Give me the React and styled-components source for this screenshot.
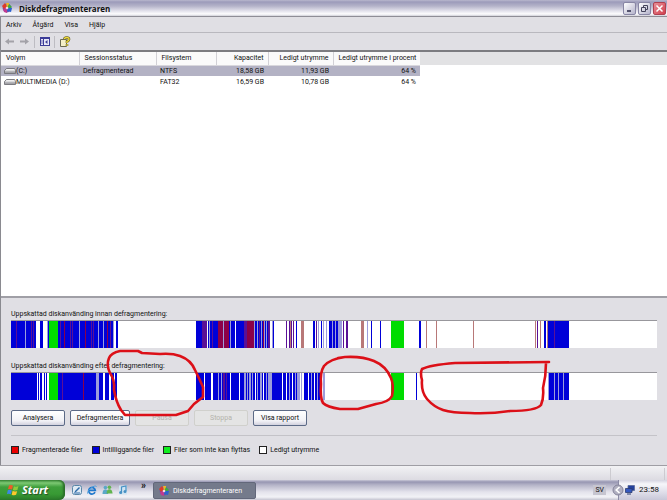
import React from "react";
import styled, { createGlobalStyle } from "styled-components";

const GlobalStyle = createGlobalStyle`
  * {
    box-sizing: border-box;
  }
  body {
    margin: 0;
    font-family: Roboto, "Liberation Sans", sans-serif;
    font-size: 7px;
    line-height: 10px;
    color: #111;
    background: #e0dfe4;
  }
  button {
    font: inherit;
    color: inherit;
    padding: 0;
  }
`;

const Screen = styled.div`
  min-height: 100vh;
  display: flex;
  flex-direction: column;
`;

const TitleBar = styled.header`
  height: 16px;
  display: flex;
  align-items: center;
  gap: 6px;
  padding: 0 1px 0 1px;
  background: linear-gradient(#b9b8cd 0, #9c9bba 2px, #b4b3c9 6px, #e3e2ec 11px, #fdfdfe 14px, #d0d0d8 16px);
`;

const Title = styled.h1`
  flex: 1;
  margin: 0;
  padding-top: 1px;
  font-family: "Open Sans", sans-serif;
  font-size: 8px;
  font-weight: bold;
`;

const WindowButtons = styled.div`
  display: flex;
  gap: 2px;
`;

const WindowButton = styled.button`
  width: 13px;
  height: 13px;
  display: flex;
  align-items: center;
  justify-content: center;
  border: 1px solid ${(p) => (p.$close ? "#b04050" : "#8886a4")};
  border-radius: 2px;
  background: ${(p) =>
    p.$close
      ? "linear-gradient(135deg, #e89098, #d2404e)"
      : "linear-gradient(135deg, #ffffff, #b4b3cb)"};
`;

const Window = styled.main`
  flex: 1;
  display: flex;
  flex-direction: column;
  border-left: 1px solid #8a8a90;
`;

const MenuBar = styled.nav`
  height: 17px;
  display: flex;
  align-items: center;
  gap: 11px;
  padding: 1px 0 0 5px;
  border-top: 1px solid #8e8d96;
  border-bottom: 1px solid #b9b8be;
`;

const MenuItem = styled.button`
  border: none;
  background: none;
`;

const Toolbar = styled.div`
  height: 19px;
  display: flex;
  align-items: center;
  padding-left: 1px;
  border-bottom: 2px solid #7c7c80;
`;

const ToolButton = styled.button`
  width: 15px;
  height: 14px;
  display: flex;
  align-items: center;
  justify-content: center;
  border: none;
  background: none;
`;

const ToolDivider = styled.span`
  width: 1px;
  height: 12px;
  margin: 0 2px;
  background: #bdbcc2;
`;

const VolumeList = styled.section`
  flex: 1;
  min-height: 100px;
  background: linear-gradient(#e2e2e4 0, #e2e2e4 13px, #fff 13px);
  border-bottom: 2px solid #a09fa6;
`;

const Table = styled.table`
  width: 419px;
  table-layout: fixed;
  border-collapse: collapse;
`;

const Th = styled.th`
  height: 13px;
  padding: 0 4px 0 5px;
  background: #fafafa;
  border-right: 1px solid #d2d1d6;
  border-bottom: 1px solid #d8d7dc;
  font-weight: normal;
  text-align: ${(p) => (p.$right ? "right" : "left")};
  white-space: nowrap;

  &:last-child {
    border-right: none;
  }
`;

const Row = styled.tr`
  background: ${(p) => (p.$selected ? "#b3b2c4" : "#fff")};
`;

const Td = styled.td`
  height: 11px;
  padding: 0 4px 0 ${(p) => (p.$first ? "3px" : "4px")};
  text-align: ${(p) => (p.$right ? "right" : "left")};
  white-space: nowrap;
`;

const Volume = styled.span`
  display: flex;
  align-items: center;
`;

const Panel = styled.section`
  position: relative;
  padding: 11px 10px 10px;
`;

const UsageLabel = styled.div`
  height: 11px;
  white-space: nowrap;
`;

const UsageBar = styled.svg`
  display: block;
  width: 100%;
  height: 28px;
  margin-bottom: 13px;
  background: #fff;
  border-top: 1px solid #98979c;
`;

const Marker = styled.svg`
  position: absolute;
  left: 0;
  top: 0;
  width: 100%;
  height: 100%;
  overflow: visible;
  pointer-events: none;
`;

const Actions = styled.div`
  display: flex;
  gap: 5px;
  padding: 0 0 9px;
  margin-top: -3px;
  border-bottom: 1px solid #c4c3c8;
`;

const ActionButton = styled.button`
  width: ${(p) => (p.$wide ? "60px" : "54px")};
  height: 16px;
  border: 1px solid #5c6a86;
  border-radius: 2px;
  background: linear-gradient(#fff, #f2f2f6 70%, #d2d1de);
  white-space: nowrap;
  &:disabled {
    color: #b4b3ac;
    border-color: #d0d0cc;
    background: #e4e4e4;
  }
`;

const Legend = styled.ul`
  display: flex;
  gap: 9px;
  margin: 0;
  padding: 9px 0 0;
  list-style: none;
`;

const LegendItem = styled.li`
  display: flex;
  align-items: center;
  gap: 3px;
  white-space: nowrap;
`;

const Swatch = styled.span`
  width: 8px;
  height: 8px;
  border: 1px solid #222;
  background: ${(p) => p.$color};
`;

const StatusBar = styled.div`
  height: 15px;
  display: flex;
  justify-content: flex-end;
  gap: 53px;
  padding: 2px 2px 0 0;
  border-top: 1px solid #9f9ea4;
  background: linear-gradient(#f2f2f4, #dcdbe2);
`;

const StatusDivider = styled.span`
  width: 1px;
  background: #cccbd0;
`;

const Taskbar = styled.footer`
  height: 20px;
  display: flex;
  align-items: stretch;
  background: linear-gradient(#c8c7d6 0, #9796b2 2px, #b5b4c8 5px, #e4e3ec 12px, #f2f2f6 17px, #c4c3d0 20px);
`;

const StartButton = styled.button`
  width: 65px;
  display: flex;
  align-items: center;
  gap: 3px;
  padding-left: 7px;
  border: none;
  border-radius: 0 6px 6px 0;
  background: linear-gradient(#3d8b3a 0, #7cc873 3px, #3f9f3c 7px, #389a34 14px, #2a7a2a 20px);
  box-shadow: inset -2px 0 2px #2b6e2b;
  color: #fff;
  font-family: "Open Sans", sans-serif;
  font-size: 11px;
  font-weight: bold;
  font-style: italic;
  text-shadow: 1px 1px 1px #244f24;
`;

const QuickLaunch = styled.div`
  display: flex;
  align-items: center;
  gap: 5px;
  width: 88px;
  padding-left: 7px;
`;

const QuickButton = styled.button`
  display: flex;
  border: none;
  background: none;
`;

const More = styled.span`
  margin: -8px 0 0 8px;
  font-size: 10px;
  font-weight: bold;
`;

const TaskButton = styled.button`
  width: 103px;
  display: flex;
  align-items: center;
  gap: 3px;
  margin: 2px 0 1px;
  padding-left: 4px;
  border: 1px solid #62677a;
  border-radius: 2px;
  background: #747a8b;
  color: #fff;
`;

const Language = styled.span`
  align-self: center;
  margin: 0 12px 0 auto;
  padding: 0 2px;
  background: #c6c5d0;
`;

const Tray = styled.div`
  width: 49px;
  display: flex;
  align-items: center;
  gap: 1px;
  border-left: 1px solid #8d8ca6;
  background: linear-gradient(#d4d3e0 0, #f6f6fa 4px, #e0dfea 12px, #c8c7d8 20px);
`;

const TrayArrow = styled.button`
  display: flex;
  margin-left: -7px;
  border: none;
  background: none;
`;

const Clock = styled.span`
  margin-left: 3px;
  font-size: 8px;
`;

const BLUE = "#0000d8";
const GREEN = "#00dc00";
const MAROON = "#8c0048";
const PURPLE = "#5a1096";
const LILAC = "#9c9cdc";
const BROWN = "#b87878";
const WHITE = "#fff";

// [start, width, colour], the whole disk is 1938 units long
const before = [
  [0, 75, BLUE], [15, 2, PURPLE], [42, 3, LILAC], [60, 3, PURPLE], [66, 2, PURPLE],
  [88, 8, BLUE], [108, 2, LILAC], [111, 3, BLUE], [114, 26, GREEN],
  [140, 165, BLUE], [148, 3, PURPLE], [158, 2, MAROON], [176, 3, PURPLE], [184, 3, PURPLE],
  [205, 3, LILAC], [222, 3, MAROON], [239, 3, PURPLE], [247, 3, PURPLE], [260, 3, LILAC],
  [277, 3, LILAC], [289, 3, MAROON], [297, 3, PURPLE], [305, 2, LILAC], [314, 7, BLUE],
  [555, 220, BLUE], [574, 14, PURPLE], [589, 3, WHITE], [595, 2, LILAC], [604, 3, PURPLE],
  [620, 17, MAROON], [637, 3, LILAC], [640, 14, MAROON], [656, 2, LILAC], [672, 3, WHITE],
  [700, 7, PURPLE], [707, 23, MAROON], [730, 3, LILAC], [738, 3, LILAC], [744, 4, PURPLE],
  [749, 3, LILAC], [755, 3, MAROON], [759, 3, LILAC], [764, 5, LILAC], [770, 7, PURPLE],
  [777, 3, WHITE], [782, 5, LILAC], [787, 2, BLUE], [826, 2, PURPLE], [834, 9, PURPLE],
  [838, 2, BROWN], [847, 3, PURPLE], [856, 2, BLUE], [871, 8, BROWN],
  [906, 5, BLUE], [914, 3, PURPLE], [922, 3, LILAC], [930, 2, BLUE], [937, 3, LILAC],
  [944, 4, LILAC], [954, 28, BLUE], [962, 2, LILAC], [972, 2, LILAC], [982, 10, LILAC],
  [996, 3, PURPLE], [1004, 6, PURPLE], [1051, 7, BROWN], [1067, 3, LILAC], [1081, 2, BLUE],
  [1108, 2, BLUE], [1140, 38, GREEN], [1223, 8, BLUE], [1246, 2, BROWN], [1276, 2, BROWN],
  [1387, 2, BROWN], [1572, 3, BROWN], [1578, 3, PURPLE], [1587, 3, BROWN],
  [1600, 6, BLUE], [1608, 2, BROWN], [1612, 61, BLUE], [1629, 3, PURPLE],
];

const after = [
  [0, 77, BLUE], [80, 4, BLUE], [88, 6, BLUE], [98, 4, BLUE], [106, 3, BLUE],
  [114, 26, GREEN], [140, 116, BLUE], [152, 3, PURPLE], [215, 3, MAROON], [256, 8, LILAC],
  [264, 13, BLUE], [281, 14, BLUE], [301, 7, BLUE], [313, 5, BLUE],
  [555, 250, BLUE], [579, 3, WHITE], [601, 4, WHITE], [620, 2, LILAC], [629, 5, LILAC],
  [637, 5, PURPLE], [646, 3, PURPLE], [656, 3, WHITE], [684, 3, WHITE], [699, 5, LILAC],
  [708, 3, LILAC], [715, 4, LILAC], [723, 3, LILAC], [731, 4, WHITE], [739, 3, LILAC],
  [747, 5, LILAC], [756, 3, WHITE], [764, 3, LILAC], [771, 11, LILAC],
  [784, 74, BLUE], [813, 3, WHITE], [824, 3, WHITE], [834, 3, LILAC], [843, 3, WHITE],
  [852, 3, LILAC], [858, 9, LILAC], [870, 3, LILAC], [879, 51, BLUE], [892, 3, WHITE],
  [901, 3, LILAC], [908, 3, WHITE], [918, 2, LILAC], [928, 5, LILAC], [937, 4, LILAC],
  [1140, 38, GREEN], [1216, 2, BLUE],
  [1612, 2, LILAC], [1614, 61, BLUE], [1628, 3, LILAC], [1640, 3, LILAC], [1655, 3, LILAC],
];

const volumes = [
  { name: "(C:)", status: "Defragmenterad", fs: "NTFS", size: "18,58 GB", free: "11,93 GB", percent: "64 %", selected: true },
  { name: "MULTIMEDIA (D:)", status: "", fs: "FAT32", size: "16,59 GB", free: "10,78 GB", percent: "64 %" },
];

const legend = [
  { label: "Fragmenterade filer", color: "#e80000" },
  { label: "Intilliggande filer", color: "#0000d8" },
  { label: "Filer som inte kan flyttas", color: "#10ee20" },
  { label: "Ledigt utrymme", color: "#fff" },
];

const DefragIcon = ({ size = 12 }) => (
  <svg width={size} height={size} viewBox="0 0 12 12">
    <circle cx="6" cy="6" r="4.4" fill="#7050a8" />
    <path d="M1 4L4 1l2 4-3 2z" fill="#e03a28" />
    <path d="M5 1l3 0 0 4-2 1z" fill="#f0b428" />
    <path d="M8 2l3 3-3 2-2-1z" fill="#3cab40" />
    <path d="M11 6l-1 4-4-1 1-3z" fill="#2b62d0" />
    <path d="M2 7l4-1 0 5-3-1z" fill="#c03a90" />
    <circle cx="6" cy="6" r="1.3" fill="#f4d8e0" />
  </svg>
);

const DriveIcon = () => (
  <svg width="12" height="8" viewBox="0 0 12 8">
    <path d="M2.5 1.5h8l1 2v3h-11v-3z" fill="#c4c4c8" stroke="#707076" strokeWidth="0.9" />
    <path d="M2.6 2h7.6l.8 1.6H1.2z" fill="#f0f0f0" />
    <path d="M1 5.2h10" stroke="#8a8a90" strokeWidth="0.8" />
  </svg>
);

const Arrow = ({ flip }) => (
  <svg width="9" height="7" viewBox="0 0 9 7">
    <path
      d={flip ? "M0 2.5h5V.5l4 3-4 3v-2H0z" : "M9 2.5H4V.5l-4 3 4 3v-2h5z"}
      fill="#a3a2a8"
    />
  </svg>
);

const Stripes = ({ data, label }) => (
  <UsageBar
    viewBox="0 0 1938 27"
    preserveAspectRatio="none"
    shapeRendering="crispEdges"
    role="img"
    aria-label={label}
  >
    {data.map(([x, width, color], i) => (
      <rect key={i} x={x} y="0" width={Math.max(width, 3)} height="27" fill={color} />
    ))}
  </UsageBar>
);

const App = () => {
  return (
    <Screen>
      <GlobalStyle />
      <TitleBar>
        <DefragIcon />
        <Title>Diskdefragmenteraren</Title>
        <WindowButtons>
          <WindowButton aria-label="Minimera">
            <svg width="9" height="9" viewBox="0 0 9 9">
              <path d="M2 7h4" stroke="#333350" strokeWidth="1.6" />
            </svg>
          </WindowButton>
          <WindowButton aria-label="Återställ">
            <svg width="9" height="9" viewBox="0 0 9 9" fill="none" stroke="#44445c">
              <path d="M3.5 3V1.5h4v4H6" />
              <path d="M1.5 3.5h4v4h-4z" />
            </svg>
          </WindowButton>
          <WindowButton $close aria-label="Stäng">
            <svg width="9" height="9" viewBox="0 0 9 9">
              <path d="M1.5 1.5l6 6M7.5 1.5l-6 6" stroke="#fff" strokeWidth="1.5" />
            </svg>
          </WindowButton>
        </WindowButtons>
      </TitleBar>

      <Window>
        <MenuBar>
          <MenuItem>Arkiv</MenuItem>
          <MenuItem>Åtgärd</MenuItem>
          <MenuItem>Visa</MenuItem>
          <MenuItem>Hjälp</MenuItem>
        </MenuBar>
        <Toolbar>
          <ToolButton aria-label="Bakåt">
            <Arrow />
          </ToolButton>
          <ToolButton aria-label="Framåt">
            <Arrow flip />
          </ToolButton>
          <ToolDivider />
          <ToolButton aria-label="Visa konsolträd">
            <svg width="10" height="9" viewBox="0 0 10 9">
              <path d="M0 0h10v9H0z" fill="#3c3c98" />
              <path d="M1 2h2v6H1zM4 2h5v6H4z" fill="#e8e8f8" />
              <path d="M1 4h2M1 6h2" stroke="#3c3c98" strokeWidth="0.7" />
              <path d="M7.5 3v4L5 5z" fill="#3c3c98" />
            </svg>
          </ToolButton>
          <ToolDivider />
          <ToolButton aria-label="Hjälp">
            <svg width="12" height="11" viewBox="0 0 12 11">
              <path d="M1.5 3.5h6v7h-6z" fill="#f4f0c8" stroke="#6a6a50" />
              <path
                d="M5.5 3Q5.5 1.5 7.8 1.5T10 3.4Q10 4.6 8 5.4V7M8 8.2v1.6"
                fill="none"
                stroke="#5a5410"
                strokeWidth="2.6"
              />
              <path
                d="M5.5 3Q5.5 1.5 7.8 1.5T10 3.4Q10 4.6 8 5.4V7M8 8.2v1.6"
                fill="none"
                stroke="#f0dc40"
                strokeWidth="1.4"
              />
            </svg>
          </ToolButton>
        </Toolbar>

        <VolumeList>
          <Table>
            <colgroup>
              <col width="78" />
              <col width="77" />
              <col width="60" />
              <col width="52" />
              <col width="65" />
              <col width="87" />
            </colgroup>
            <thead>
              <tr>
                <Th>Volym</Th>
                <Th>Sessionsstatus</Th>
                <Th>Filsystem</Th>
                <Th $right>Kapacitet</Th>
                <Th $right>Ledigt utrymme</Th>
                <Th $right>Ledigt utrymme i procent</Th>
              </tr>
            </thead>
            <tbody>
              {volumes.map((v) => (
                <Row key={v.name} $selected={v.selected}>
                  <Td $first>
                    <Volume>
                      <DriveIcon />
                      {v.name}
                    </Volume>
                  </Td>
                  <Td>{v.status}</Td>
                  <Td>{v.fs}</Td>
                  <Td $right>{v.size}</Td>
                  <Td $right>{v.free}</Td>
                  <Td $right>{v.percent}</Td>
                </Row>
              ))}
            </tbody>
          </Table>
        </VolumeList>

        <Panel>
          <UsageLabel>Uppskattad diskanvänding innan defragmentering:</UsageLabel>
          <Stripes data={before} label="Före defragmentering" />
          <UsageLabel>Uppskattad diskanvänding efter defragmentering:</UsageLabel>
          <Stripes data={after} label="Efter defragmentering" />
          <Actions>
            <ActionButton>Analysera</ActionButton>
            <ActionButton $wide>Defragmentera</ActionButton>
            <ActionButton disabled>Pausa</ActionButton>
            <ActionButton disabled>Stoppa</ActionButton>
            <ActionButton>Visa rapport</ActionButton>
          </Actions>
          <Legend>
            {legend.map((item) => (
              <LegendItem key={item.label}>
                <Swatch $color={item.color} />
                {item.label}
              </LegendItem>
            ))}
          </Legend>
          {/* hand-drawn red rings over the free areas */}
          <Marker
            viewBox="1 298 666 167"
            preserveAspectRatio="none"
            fill="none"
            stroke="#dc1018"
            strokeWidth="2.6"
            strokeLinecap="round"
            strokeLinejoin="round"
          >
            <path d="M203 397L203 387Q199 378 195 370Q191 360 180 356Q172 353 160 354L142 353L138 351L120 351Q111 353 109 358Q106 365 110 373Q115 380 114 390Q116 402 121 410L125 415L152 415L176 415L188 411L194 404L203 397Z" />
            <path d="M345 357Q330 359 324 366Q320 372 321 384Q320 398 323 403Q327 407 340 409L358 409L376 404Q389 402 392 396Q394 385 391 378Q386 366 374 361Q362 356 345 357L338 358" />
            <path d="M549 362L455 363Q430 365 422 369Q420 373 422 380Q421 392 427 399Q434 407 443 410Q452 413 470 413Q490 414 510 411Q536 411 541 405Q544 398 543 388Q546 376 546 363" />
          </Marker>
        </Panel>
      </Window>

      <StatusBar>
        <StatusDivider />
        <StatusDivider />
      </StatusBar>

      <Taskbar>
        <StartButton>
          <svg width="12" height="12" viewBox="0 0 12 12">
            <path d="M2 1.5Q4 .5 6 1.8L5 5.6Q3 4.6 1 5.3z" fill="#f05a28" />
            <path d="M6.8 2.2Q9 3.2 11.5 2L10.4 6Q8 7 5.9 5.9z" fill="#8ccc3c" />
            <path d="M.8 6.2Q3 5.4 4.8 6.5L3.8 10.2Q2 9.2 0 10z" fill="#3c86e8" />
            <path d="M5.6 6.8Q8 8 10.2 6.9L9.1 10.8Q7 11.8 4.7 10.7z" fill="#fcc82c" />
          </svg>
          Start
        </StartButton>
        <QuickLaunch>
          <QuickButton aria-label="Visa skrivbordet">
            <svg width="10" height="10" viewBox="0 0 10 10">
              <rect x="0.5" y="0.5" width="9" height="9" rx="2" fill="#dfeaf4" stroke="#5a86a8" />
              <path d="M3 6l4-4 1 1-4 4-1.5.5z" fill="#2f6aa8" />
              <path d="M2 8h6" stroke="#2f6aa8" />
            </svg>
          </QuickButton>
          <QuickButton aria-label="Internet Explorer">
            <svg width="10" height="10" viewBox="0 0 10 10" fill="none">
              <path d="M8 7.2A3.3 3.3 0 1 1 8.3 5.4H2.4" stroke="#1f78cc" strokeWidth="1.7" />
              <path d="M.6 8.6Q0 6 4 3T9.6 1.6" stroke="#4c9cdc" />
            </svg>
          </QuickButton>
          <QuickButton aria-label="Messenger">
            <svg width="11" height="10" viewBox="0 0 11 10">
              <circle cx="3.4" cy="2.6" r="1.8" fill="#5aa8c8" />
              <path d="M.5 9Q.5 4.6 3.4 4.6T6.2 9z" fill="#5aa8c8" />
              <circle cx="7.4" cy="2.2" r="1.8" fill="#62b450" />
              <path d="M4.6 8.6Q4.6 4.2 7.4 4.2T10.6 8.6z" fill="#62b450" />
            </svg>
          </QuickButton>
          <QuickButton aria-label="Musik">
            <svg width="10" height="10" viewBox="0 0 10 10">
              <rect x="1" y="0.5" width="8" height="9" fill="#cfe4f2" />
              <path d="M3.5 7V2l4.5-1v5" fill="none" stroke="#4690c4" strokeWidth="1.2" />
              <circle cx="2.7" cy="7.4" r="1.5" fill="#4690c4" />
              <circle cx="7" cy="6.6" r="1.5" fill="#4690c4" />
            </svg>
          </QuickButton>
          <More>»</More>
        </QuickLaunch>
        <TaskButton>
          <DefragIcon />
          Diskdefragmenteraren
        </TaskButton>
        <Language>SV</Language>
        <Tray>
          <TrayArrow aria-label="Visa dolda ikoner">
            <svg width="12" height="12" viewBox="0 0 12 12">
              <circle cx="6" cy="6" r="5" fill="#b0afc0" stroke="#84839a" />
              <path d="M7.5 3L4.2 6l3.3 3" fill="none" stroke="#fff" strokeWidth="1.6" />
            </svg>
          </TrayArrow>
          <svg width="10" height="10" viewBox="0 0 10 10">
            <path d="M3 .5h6.5v5H3z" fill="#24409c" stroke="#5a6a9a" strokeWidth="0.8" />
            <path d="M.5 3.5H7v4H.5z" fill="#3458c0" stroke="#2a3a70" strokeWidth="0.8" />
            <path d="M2 9h4" stroke="#2a3a70" />
          </svg>
          <Clock>23:58</Clock>
        </Tray>
      </Taskbar>
    </Screen>
  );
};

export default App;
